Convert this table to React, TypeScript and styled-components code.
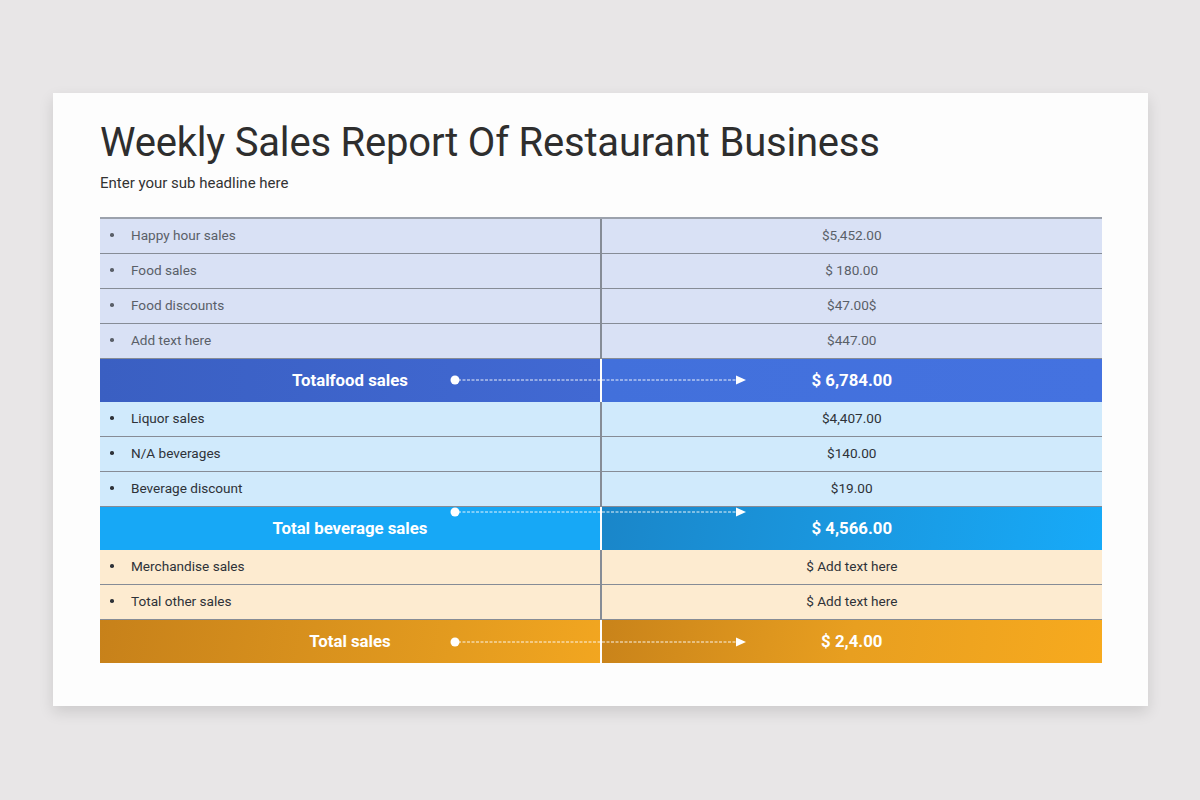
import React from 'react';
import styled, { createGlobalStyle } from 'styled-components';

const GlobalStyle = createGlobalStyle`
  html, body {
    margin: 0;
    padding: 0;
    background: #e8e6e7;
    font-family: Roboto, "Liberation Sans", Arial, sans-serif;
  }
`;

const Page = styled.div`
  width: 1200px;
  height: 800px;
  padding: 93px 0 0 53px;
  box-sizing: border-box;
`;

const Slide = styled.div`
  width: 1095px;
  height: 613px;
  background: #fdfdfd;
  box-shadow: 0 6px 14px rgba(0, 0, 0, 0.12);
  padding: 26px 46px 0 47px;
  box-sizing: border-box;
  display: flex;
  flex-direction: column;
`;

const Title = styled.h1`
  margin: 0;
  font-size: 40px;
  font-weight: 400;
  line-height: 48px;
  color: #2e2e2e;
  letter-spacing: -0.2px;
`;

const Subtitle = styled.p`
  margin: 7px 0 0;
  font-size: 15px;
  line-height: 18px;
  color: #333;
`;

const Table = styled.div`
  margin-top: 25px;
  width: 1002px;
  border-top: 2px solid #9ca2ad;
  display: flex;
  flex-direction: column;
`;

type Tone = 'food' | 'bev' | 'other';

const rowBg: Record<Tone, string> = {
  food: '#d9e1f5',
  bev: '#d0eafc',
  other: '#fdebd0',
};

const textColor: Record<Tone, string> = {
  food: '#5a5f68',
  bev: '#2e3238',
  other: '#2e3238',
};

const Row = styled.div<{ tone: Tone }>`
  display: grid;
  grid-template-columns: 500px 1.5px 1fr;
  height: 35px;
  box-sizing: border-box;
  border-bottom: 1.5px solid #868c96;
  background: ${p => rowBg[p.tone]};
  color: ${p => textColor[p.tone]};
  font-size: 13.6px;
`;

const LabelCell = styled.div`
  display: flex;
  align-items: center;
  padding: 0 0 2px 10px;
`;

const Bullet = styled.span`
  width: 3.5px;
  height: 3.5px;
  border-radius: 50%;
  background: currentColor;
  margin-right: 17.5px;
`;

const Divider = styled.div<{ light?: boolean }>`
  background: ${p => (p.light ? 'rgba(255,255,255,0.6)' : '#868c96')};
`;

const ValueCell = styled.div`
  display: flex;
  align-items: center;
  justify-content: center;
  padding-bottom: 2px;
`;

const totalBg: Record<Tone, { left: string; right: string }> = {
  food: {
    left: 'linear-gradient(90deg, #3a5fc2 0%, #4169d3 100%)',
    right: 'linear-gradient(90deg, #4270db 0%, #4472e0 100%)',
  },
  bev: {
    left: '#17a8f6',
    right: 'linear-gradient(100deg, #1a86c9 0%, #1a98e0 50%, #17aaf8 100%)',
  },
  other: {
    left: 'linear-gradient(100deg, #c7811a 0%, #e39b1f 70%, #f2a620 100%)',
    right: 'linear-gradient(100deg, #c9831a 0%, #e89f20 50%, #f7aa1e 100%)',
  },
};

const TotalRow = styled.div`
  position: relative;
  display: grid;
  grid-template-columns: 500px 1.5px 1fr;
  height: 43px;
  color: #fff;
  font-size: 16.8px;
  font-weight: 700;
`;

const TotalCell = styled.div<{ bg: string }>`
  display: flex;
  align-items: center;
  justify-content: center;
  padding-bottom: 1px;
  background: ${p => p.bg};
`;

const Connector = styled.svg<{ top: number }>`
  position: absolute;
  left: 350px;
  top: ${p => p.top}px;
  width: 300px;
  height: 12px;
  overflow: visible;
`;

const Arrow: React.FC<{ top: number }> = ({ top }) => (
  <Connector top={top} viewBox="0 0 300 12">
    <circle cx="5" cy="6" r="4.5" fill="#fff" />
    <line x1="8" y1="6" x2="288" y2="6" stroke="#fff" strokeWidth="1" strokeDasharray="3 1.5" opacity="0.9" />
    <polygon points="286,1.5 296,6 286,10.5" fill="#fff" />
  </Connector>
);

interface Item {
  label: string;
  value: string;
}

const Section: React.FC<{ tone: Tone; items: Item[]; total: string; sum: string; arrowTop: number }> = ({
  tone,
  items,
  total,
  sum,
  arrowTop,
}) => (
  <>
    {items.map(item => (
      <Row key={item.label} tone={tone}>
        <LabelCell>
          <Bullet />
          {item.label}
        </LabelCell>
        <Divider />
        <ValueCell>{item.value}</ValueCell>
      </Row>
    ))}
    <TotalRow>
      <TotalCell bg={totalBg[tone].left}>{total}</TotalCell>
      <Divider light />
      <TotalCell bg={totalBg[tone].right}>{sum}</TotalCell>
      <Arrow top={arrowTop} />
    </TotalRow>
  </>
);

const App: React.FC = () => {
  const food = [
    { label: 'Happy hour sales', value: '$5,452.00' },
    { label: 'Food sales', value: '$ 180.00' },
    { label: 'Food discounts', value: '$47.00$' },
    { label: 'Add text here', value: '$447.00' },
  ];
  const beverages = [
    { label: 'Liquor sales', value: '$4,407.00' },
    { label: 'N/A beverages', value: '$140.00' },
    { label: 'Beverage discount', value: '$19.00' },
  ];
  const other = [
    { label: 'Merchandise sales', value: '$ Add text here' },
    { label: 'Total other sales', value: '$ Add text here' },
  ];

  return (
    <>
      <GlobalStyle />
      <Page>
        <Slide>
          <Title>Weekly Sales Report Of Restaurant Business</Title>
          <Subtitle>Enter your sub headline here</Subtitle>
          <Table>
            <Section tone="food" items={food} total="Totalfood sales" sum="$ 6,784.00" arrowTop={15} />
            <Section tone="bev" items={beverages} total="Total beverage sales" sum="$ 4,566.00" arrowTop={-1} />
            <Section tone="other" items={other} total="Total sales" sum="$ 2,4.00" arrowTop={16} />
          </Table>
        </Slide>
      </Page>
    </>
  );
};

export default App;
